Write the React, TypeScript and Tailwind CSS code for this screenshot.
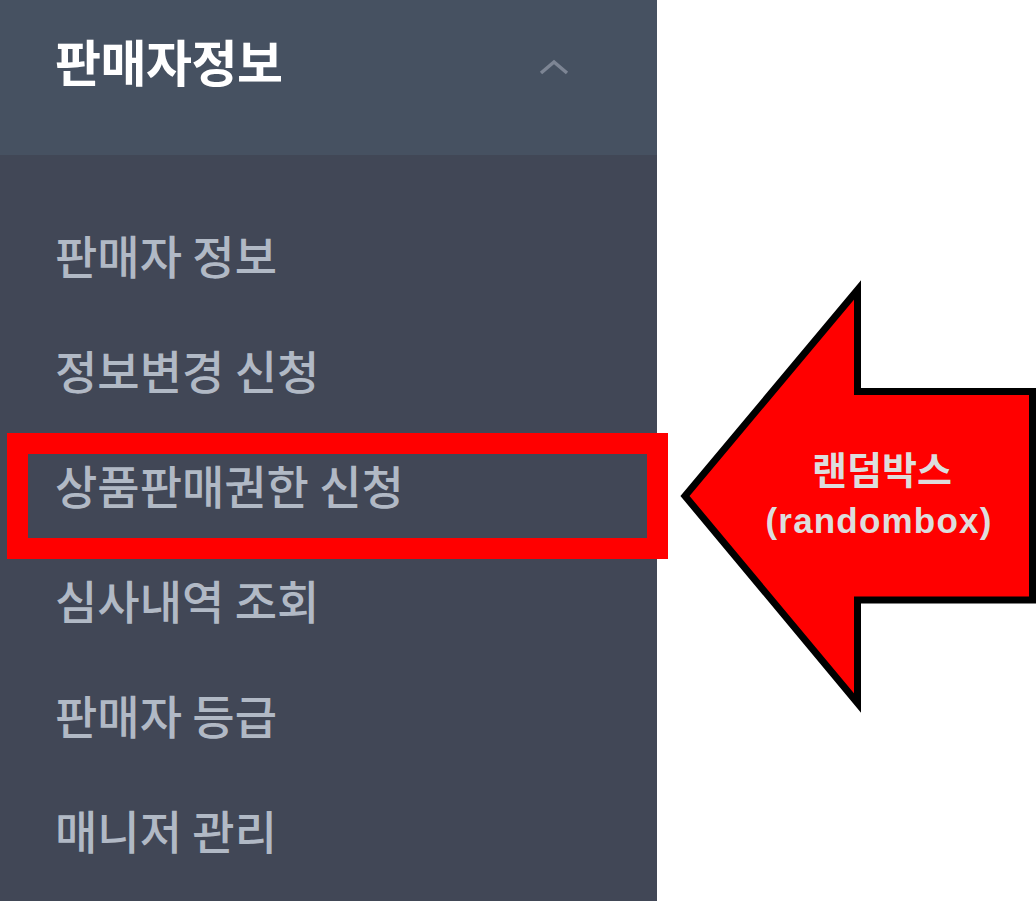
import React from "react";

const items = [
  "판매자 정보",
  "정보변경 신청",
  "상품판매권한 신청",
  "심사내역 조회",
  "판매자 등급",
  "매니저 관리",
];

export default function App() {
  return (
    <div
      className="relative flex w-[1036px] h-[901px] overflow-hidden bg-white"
      style={{ fontFamily: '"Noto Sans CJK KR", "Noto Sans", sans-serif' }}
    >
      <aside className="flex flex-col w-[657px] h-[901px] bg-[#414756]">
        <div className="flex items-center justify-between h-[155px] bg-[#465161] pl-[55px] pr-[88px] pb-[36px]">
          <span className="text-[50px] font-bold text-white leading-none tracking-[-0.5px]">
            판매자정보
          </span>
          <svg width="30" height="16" viewBox="0 0 30 16" className="mt-[14px]">
            <polyline
              points="2,14 15,3 28,14"
              fill="none"
              stroke="#7d8594"
              strokeWidth="3.5"
              strokeLinejoin="miter"
            />
          </svg>
        </div>
        <ul className="flex flex-col pt-[41px]">
          {items.map((t) => (
            <li
              key={t}
              className="flex items-center h-[115px] pl-[55px] text-[46px] font-medium text-[#b1b9c5] leading-none"
            >
              {t}
            </li>
          ))}
        </ul>
      </aside>
      <div className="flex-1 bg-white" />

      {/* red highlight box */}
      <div className="absolute left-[7px] top-[433px] w-[661px] h-[126px] border-[21px] border-[#ff0000]" />

      {/* arrow */}
      <svg
        className="absolute left-[670px] top-[270px]"
        width="366"
        height="450"
        viewBox="670 270 366 450"
      >
        <polygon
          points="685,496 857.5,290 857.5,391.5 1032.5,391.5 1032.5,600 857.5,600 857.5,703"
          fill="#ff0000"
          stroke="#000000"
          strokeWidth="7"
          strokeLinejoin="miter"
        />
      </svg>
      <div
        className="absolute left-[759px] top-[446px] w-[240px] flex flex-col items-center text-[#dddddd] font-bold"
        style={{ fontFamily: '"Liberation Sans", "Noto Sans CJK KR", sans-serif' }}
      >
        <span className="leading-[50px] text-[38px] pl-[6px]">랜덤박스</span>
        <span className="leading-[50px] text-[35px] tracking-[1.2px]">(randombox)</span>
      </div>
    </div>
  );
}
